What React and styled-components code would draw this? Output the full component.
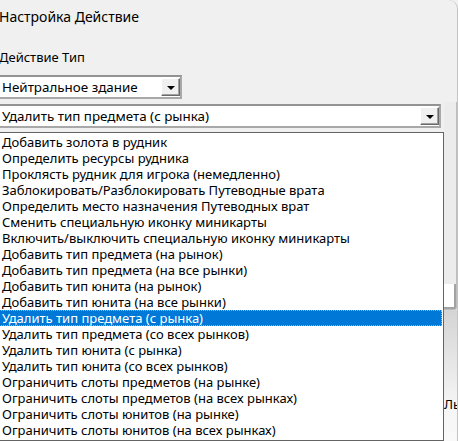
import React from 'react';
import styled, { createGlobalStyle } from 'styled-components';

const GlobalStyle = createGlobalStyle`
  html, body {
    margin: 0;
    padding: 0;
    background: #f0f0f0;
  }
  body {
    font-family: "Noto Sans", "Liberation Sans", sans-serif;
    font-size: 13px;
    color: #000;
  }
`;

const Window = styled.div`
  width: 458px;
  height: 441px;
  box-sizing: border-box;
  overflow: hidden;
  display: flex;
  background: #f0f0f0;
  border-right: 1px solid #c4c4c4;
  border-top-right-radius: 9px;
`;

const Main = styled.div`
  flex: none;
  width: 447px;
  margin-left: -3px;
  display: flex;
  flex-direction: column;
`;

const Title = styled.div`
  height: 30px;
  padding: 8px 0 0 2px;
  box-sizing: border-box;
  font-size: 14px;
  line-height: 17px;
`;

const Label = styled.div`
  margin-top: 19px;
  height: 26px;
  padding-left: 2px;
  line-height: 16px;
`;

const ComboWrap = styled.div`
  position: relative;
  width: ${p => p.$width}px;
  margin-top: ${p => p.$gap || 0}px;
`;

const Combo = styled.div`
  height: 24px;
  box-sizing: border-box;
  display: flex;
  align-items: center;
  background: #fff;
  border: 2px solid #a8a8a8;
  border-top-color: #939393;
  border-left-color: #939393;
`;

const ComboText = styled.span`
  flex: 1;
  padding-left: 3px;
  font-size: 13.4px;
  white-space: nowrap;
  overflow: hidden;
`;

const DropButton = styled.div`
  width: 19px;
  height: 18px;
  box-sizing: border-box;
  display: flex;
  align-items: center;
  justify-content: center;
  background: #f0f0f0;
  border: 1px solid;
  border-color: #fff #6a6a6a #6a6a6a #fff;
  box-shadow: inset -1px -1px 0 #a0a0a0;
`;

const Arrow = styled.span`
  width: 0;
  height: 0;
  border-left: 4px solid transparent;
  border-right: 4px solid transparent;
  border-top: 4px solid #000;
  margin-top: 1px;
`;

const ListBox = styled.div`
  position: absolute;
  top: calc(100% + 4px);
  left: 0;
  width: 447px;
  box-sizing: border-box;
  padding: 1px 1px 2px;
  background: #fff;
  border: 1px solid #646464;
  z-index: 2;
`;

const Item = styled.div`
  height: 16px;
  line-height: 16px;
  padding-left: 3px;
  white-space: nowrap;
  box-sizing: border-box;
  color: ${p => (p.$selected ? '#fff' : '#000')};
  background: ${p => (p.$selected ? '#0078d7' : 'transparent')};
  outline: ${p => (p.$selected ? '1px dotted #f3a14a' : 'none')};
  outline-offset: -1px;
`;

const Side = styled.div`
  flex: none;
  width: 13px;
  display: flex;
  flex-direction: column;
`;

const SidePanel = styled.div`
  margin-top: 102px;
  height: 208px;
  box-sizing: border-box;
  display: flex;
  flex-direction: column;
  justify-content: flex-end;
  background: #ececec;
  border-right: 1px solid #bdbdbd;
  border-bottom: 1px solid #bdbdbd;
  border-bottom-right-radius: 3px;
`;

const SideField = styled.div`
  height: 25px;
  box-sizing: border-box;
  background: #fff;
  border-right: 2px solid #a3a3a3;
  border-bottom: 2px solid #a3a3a3;
  border-bottom-right-radius: 2px;
`;

const SideGround = styled.div`
  flex: 1;
  padding-top: 86px;
  background: linear-gradient(#d4d4d4, #f5f5f5 95px, #f9f9f9);
`;

const SideLabel = styled.div`
  white-space: nowrap;
  line-height: 16px;
`;

const items = [
  'Добавить золота в рудник',
  'Определить ресурсы рудника',
  'Проклясть рудник для игрока (немедленно)',
  'Заблокировать/Разблокировать Путеводные врата',
  'Определить место назначения Путеводных врат',
  'Сменить специальную иконку миникарты',
  'Включить/выключить специальную иконку миникарты',
  'Добавить тип предмета (на рынок)',
  'Добавить тип предмета (на все рынки)',
  'Добавить тип юнита (на рынок)',
  'Добавить тип юнита (на все рынки)',
  'Удалить тип предмета (с рынка)',
  'Удалить тип предмета (со всех рынков)',
  'Удалить тип юнита (с рынка)',
  'Удалить тип юнита (со всех рынков)',
  'Ограничить слоты предметов (на рынке)',
  'Ограничить слоты предметов (на всех рынках)',
  'Ограничить слоты юнитов (на рынке)',
  'Ограничить слоты юнитов (на всех рынках)',
];

const selected = 11;

const App = () => {
  return (
    <Window>
      <GlobalStyle />
      <Main>
        <Title>Настройка Действие</Title>
        <Label>Действие Тип</Label>
        <ComboWrap $width={185}>
          <Combo>
            <ComboText>Нейтральное здание</ComboText>
            <DropButton><Arrow /></DropButton>
          </Combo>
        </ComboWrap>
        <ComboWrap $width={444} $gap={5}>
          <Combo>
            <ComboText>{items[selected]}</ComboText>
            <DropButton><Arrow /></DropButton>
          </Combo>
          <ListBox>
            {items.map((text, i) => (
              <Item key={text} $selected={i === selected}>{text}</Item>
            ))}
          </ListBox>
        </ComboWrap>
      </Main>
      <Side>
        <SidePanel>
          <SideField />
        </SidePanel>
        <SideGround>
          <SideLabel>Ль</SideLabel>
        </SideGround>
      </Side>
    </Window>
  );
};

export default App;
